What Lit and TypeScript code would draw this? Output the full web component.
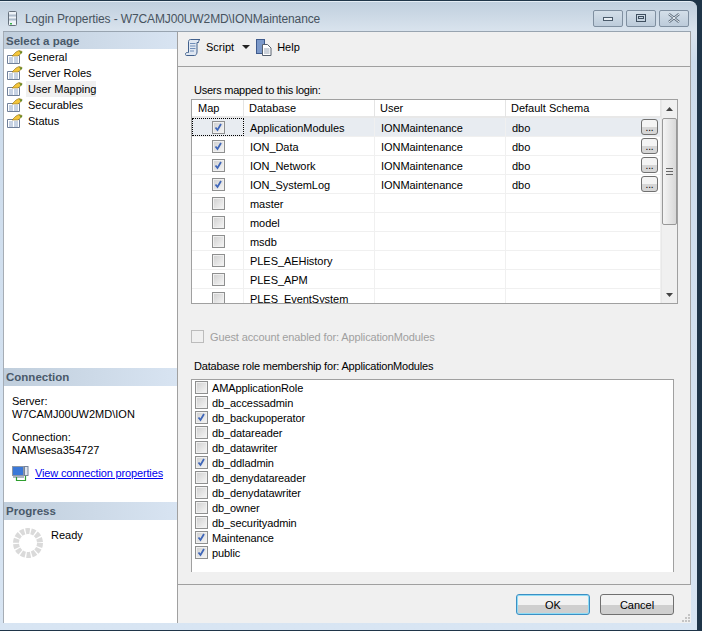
import {LitElement, css, html} from 'lit';
import {customElement} from 'lit/decorators.js';

const pages = ['General', 'Server Roles', 'User Mapping', 'Securables', 'Status'];

const users = [
  {db: 'ApplicationModules', on: true},
  {db: 'ION_Data', on: true},
  {db: 'ION_Network', on: true},
  {db: 'ION_SystemLog', on: true},
  {db: 'master', on: false},
  {db: 'model', on: false},
  {db: 'msdb', on: false},
  {db: 'PLES_AEHistory', on: false},
  {db: 'PLES_APM', on: false},
  {db: 'PLES_EventSystem', on: false},
];

const roles = [
  {name: 'AMApplicationRole', on: false},
  {name: 'db_accessadmin', on: false},
  {name: 'db_backupoperator', on: true},
  {name: 'db_datareader', on: false},
  {name: 'db_datawriter', on: false},
  {name: 'db_ddladmin', on: true},
  {name: 'db_denydatareader', on: false},
  {name: 'db_denydatawriter', on: false},
  {name: 'db_owner', on: false},
  {name: 'db_securityadmin', on: false},
  {name: 'Maintenance', on: true},
  {name: 'public', on: true},
];

const pageIcon = html`<svg class="page-icon" width="16" height="14" viewBox="0 0 16 14">
  <path d="M0.5 5.500h12v8h-12z" fill="#fff" stroke="#6f7f99"/>
  <path d="M2 8h4M7 8h4M2 10h4M7 10h4M2 12h4M7 12h4" stroke="#8fa6c8"/>
  <path d="M5 6l4-4 3-1.500 3 1-1 2-3 2.500H6z" fill="#f4c63c" stroke="#8a6a14" stroke-width=".6"/>
  <path d="M12 .8l3.500 1.200-1.500 2z" fill="#5f8a2c"/>
</svg>`;

@customElement('app-root')
export class AppRoot extends LitElement {
  static styles = css`
    :host {
      display: block;
      width: 702px;
      height: 631px;
      background: #1f3549;
      font-family: 'Liberation Sans', Arial, sans-serif;
      font-size: 11px;
      color: #000;
      overflow: hidden;
    }
    .window {
      width: 697px;
      height: 629px;
      margin-top: 1px;
      box-sizing: border-box;
      background: linear-gradient(180deg, #c0cfde 0, #dae4ee 30px, #cddcec 60px, #d8e5f3 100%);
      border-radius: 0 7px 0 0;
      padding: 0 6px 7px 3px;
      display: flex;
      flex-direction: column;
      border-top: 1px solid #e4edf5;
    }
    .titlebar {
      height: 29px;
      flex: none;
      display: flex;
      align-items: center;
      box-sizing: border-box;
      padding: 3px 0 0 5px;
      gap: 8px;
      font-size: 12px;
      color: #47535e;
      letter-spacing: -0.12px;
    }
    .title-text { flex: 1; margin-top: 2px; }
    .win-buttons { display: flex; gap: 3px; margin-right: 2px; }
    .win-btn {
      width: 30px;
      height: 17px;
      box-sizing: border-box;
      border: 1px solid #7f8fa0;
      border-radius: 2px;
      background: linear-gradient(180deg, #d4dfe9, #bccbda);
      display: flex;
      align-items: center;
      justify-content: center;
    }
    .dialog {
      flex: 1;
      min-height: 0;
      display: flex;
      background: #f0f0f0;
      border-top: 1px solid #98a4b0;
    }
    .side {
      width: 175px;
      flex: none;
      box-sizing: border-box;
      background: #fff;
      border-left: 1px solid #a6adb5;
      border-right: 1px solid #a0a0a0;
      display: flex;
      flex-direction: column;
    }
    .side-head {
      height: 18px;
      flex: none;
      display: flex;
      align-items: center;
      padding-left: 2px;
      font-weight: bold;
      font-size: 11.5px;
      color: #49596a;
      background: linear-gradient(90deg, #c0cedc, #d8e4f2);
    }
    .side-head.first { height: 17px; }
    .page-list { display: flex; flex-direction: column; height: 319px; flex: none; }
    .page-row { height: 16px; display: flex; align-items: center; padding-left: 3px; gap: 3px; }
    .page-icon { flex: none; }
    .page-name { padding: 0 2px; line-height: 16px; white-space: nowrap; }
    .page-name.active { background: #f0f0f0; width: 70px; box-sizing: border-box; }
    .conn { height: 116px; box-sizing: border-box; padding: 9px 8px 0; flex: none; line-height: 13px; }
    .conn p { margin: 0 0 10px; white-space: nowrap; }
    .conn-link { display: flex; align-items: center; gap: 6px; margin-top: -1px; white-space: nowrap; }
    .conn-link a { color: #0000ee; text-decoration: underline; letter-spacing: -0.15px; }
    .progress { display: flex; padding: 8px 0 0 9px; gap: 8px; line-height: 13px; }
    .progress span { padding-top: 1px; }
    .content { flex: 1; min-width: 0; display: flex; flex-direction: column; }
    .toolbar {
      height: 35px;
      flex: none;
      box-sizing: border-box;
      border-bottom: 1px solid #a0a0a0;
      border-right: 1px solid #a0a0a0;
      display: flex;
      align-items: center;
      padding: 0 0 4px 7px;
    }
    .tool-icon { flex: none; margin-right: 5px; }
    .arrow { width: 0; height: 0; border: 4px solid transparent; border-top-color: #222; border-bottom: 0; margin: 0 6px 0 8px; }
    .form {
      flex: 1;
      min-height: 0;
      box-sizing: border-box;
      padding: 16px 0 12px 13px;
      display: flex;
      flex-direction: column;
      border-right: 1px solid #a0a0a0;
    }
    .label { line-height: 14px; height: 14px; margin: 0 0 2px 3px; letter-spacing: -0.25px; }
    .grid {
      width: 487px;
      height: 205px;
      flex: none;
      box-sizing: border-box;
      background: #fff;
      border: 1px solid #a0a0a0;
      display: flex;
      overflow: hidden;
    }
    .table { flex: 1; min-width: 0; overflow: hidden; }
    .grid-row {
      display: grid;
      grid-template-columns: 52px 131px 131px 155px;
      height: 19px;
      box-sizing: border-box;
      border-bottom: 1px solid #f0f0f0;
      align-items: center;
    }
    .grid-row.head { height: 18px; border-bottom: 2px solid #e8e8e8; }
    .head-cell {
      border-right: 1px solid #e4e4e4;
      height: 100%;
      padding-left: 5px;
      line-height: 17px;
      box-sizing: border-box;
    }
    .head-cell.map { padding-left: 6px; }
    .grid-row.selected { background: #e8ecf1; }
    .cell {
      height: 100%;
      display: flex;
      align-items: center;
      padding: 1px 2px 0 6px;
      box-sizing: border-box;
      border-right: 1px solid #f0f0f0;
      letter-spacing: -0.05px;
    }
    .map-cell { justify-content: center; padding: 0 0 0 2px; }
    .selected .map-cell { outline: 1px dotted #000; outline-offset: -1px; }
    .more {
      margin: -1px 0 0 auto;
      width: 17px;
      height: 16px;
      box-sizing: border-box;
      border: 1px solid #707070;
      border-radius: 3px;
      background: linear-gradient(180deg, #f4f4f4 50%, #d6d6d6 50%);
      font-size: 10px;
      line-height: 15px;
      text-align: center;
    }
    .box {
      width: 13px;
      height: 13px;
      flex: none;
      box-sizing: border-box;
      border: 1px solid #8e8f8f;
      background: linear-gradient(135deg, #cfcfcf, #f6f6f6);
      box-shadow: inset 0 0 0 1px #f0f0f0;
      display: block;
    }
    .box svg { display: block; }
    .scroll {
      width: 16px;
      flex: none;
      background: #f0f0f0;
      display: flex;
      flex-direction: column;
      align-items: center;
      border-left: 1px solid #e8e8e8;
      box-sizing: border-box;
    }
    .scroll-end { width: 100%; flex: none; display: flex; align-items: center; justify-content: center; }
    .scroll-end.up { height: 18px; }
    .scroll-end.down { height: 17px; }
    .thumb {
      width: 15px;
      height: 107px;
      box-sizing: border-box;
      flex: none;
      border: 1px solid #989898;
      border-radius: 2px;
      background: linear-gradient(90deg, #f4f4f4, #d8d8d8);
      display: flex;
      align-items: center;
      justify-content: center;
    }
    .spacer { flex: 1; }
    .guest {
      display: flex;
      align-items: center;
      gap: 6px;
      color: #a0a0a0;
      margin-top: 26px;
      height: 13px;
      letter-spacing: -0.12px;
      flex: none;
    }
    .guest .box { background: #f0f0f0; border-color: #bcbcbc; box-shadow: none; }
    .role-label { margin: 16px 0 6px 3px; height: 14px; line-height: 14px; letter-spacing: -0.2px; flex: none; }
    .roles {
      width: 483px;
      flex: 1;
      min-height: 0;
      box-sizing: border-box;
      background: #fff;
      border: 1px solid #a0a0a0;
      border-bottom: none;
      padding: 0 0 0 3px;
      display: flex;
      flex-direction: column;
    }
    .role { height: 15px; display: flex; align-items: center; gap: 4px; flex: none; letter-spacing: -0.1px; }
    .footer {
      height: 39px;
      flex: none;
      box-sizing: border-box;
      border-top: 1px solid #a0a0a0;
      display: flex;
      justify-content: flex-end;
      gap: 10px;
      padding: 9px 17px 0 0;
      position: relative;
    }
    .btn {
      width: 74px;
      height: 21px;
      box-sizing: border-box;
      border: 1px solid #707070;
      border-radius: 3px;
      background: linear-gradient(180deg, #f2f2f2 50%, #cfcfcf 50%);
      display: flex;
      align-items: center;
      justify-content: center;
    }
    .btn.primary { border-color: #3c8fc4; box-shadow: inset 0 0 0 1px #8fdcf5; }
    .grip { position: absolute; right: 1px; bottom: 1px; }
  `;

  box(on: boolean) {
    return html`<span class="box">${on
      ? html`<svg width="11" height="11" viewBox="0 0 11 11"><path d="M2.500 5.500l2 2.500 3.500-6" fill="none" stroke="#3f66b8" stroke-width="1.800"/></svg>`
      : ''}</span>`;
  }

  render() {
    return html`<div class="window">
      <div class="titlebar">
        <svg width="9" height="15" viewBox="0 0 9 15">
          <rect x="0.500" y="0.500" width="8" height="14" rx="1" fill="#eef3f8" stroke="#66717d"/>
          <path d="M1 4.500h7M1 8.500h7" stroke="#aebccb" stroke-width="2"/>
          <rect x="2" y="12" width="2" height="1.500" fill="#3bb24a"/>
        </svg>
        <span class="title-text">Login Properties - W7CAMJ00UW2MD\\IONMaintenance</span>
        <div class="win-buttons">
          <span class="win-btn"><svg width="12" height="8" viewBox="0 0 12 8"><rect x="1.500" y="3.500" width="9" height="3" fill="#e8eef4" stroke="#4a5a6a"/></svg></span>
          <span class="win-btn"><svg width="12" height="10" viewBox="0 0 12 10"><rect x="1.500" y="1.500" width="9" height="7" fill="none" stroke="#3f4f5f"/><rect x="3.500" y="3.500" width="5" height="2" fill="none" stroke="#3f4f5f"/></svg></span>
          <span class="win-btn"><svg width="14" height="10" viewBox="0 0 14 10"><path d="M2 1l10 8M12 1L2 9" stroke="#5a6a7a" stroke-width="2.400"/><path d="M2 1l10 8M12 1L2 9" stroke="#eef3f8" stroke-width="1"/></svg></span>
        </div>
      </div>
      <div class="dialog">
        <div class="side">
          <div class="side-head first">Select a page</div>
          <div class="page-list">
            ${pages.map((p) => html`<div class="page-row">${pageIcon}<span class="page-name ${p === 'User Mapping' ? 'active' : ''}">${p}</span></div>`)}
          </div>
          <div class="side-head">Connection</div>
          <div class="conn">
            <p>Server:<br />W7CAMJ00UW2MD\\ION</p>
            <p>Connection:<br />NAM\\sesa354727</p>
            <div class="conn-link">
              <svg width="17" height="15" viewBox="0 0 17 15">
                <rect x="0.500" y="0.500" width="11" height="9" fill="#3a78d8" stroke="#8c97a6"/>
                <rect x="12.500" y="0.500" width="3.500" height="9" fill="#dfe6ee" stroke="#77849a"/>
                <rect x="1" y="10" width="11" height="2" fill="#a9b4c2"/>
                <path d="M4.500 11v3.500h9V10" fill="none" stroke="#2f9e2f" stroke-width="1.200"/>
              </svg>
              <a href="#">View connection properties</a>
            </div>
          </div>
          <div class="side-head">Progress</div>
          <div class="progress">
            <svg width="30" height="30" viewBox="0 0 30 30">
              <circle cx="15" cy="15" r="12" fill="none" stroke="#dadada" stroke-width="6" stroke-dasharray="4.100 1.286"/>
            </svg>
            <span>Ready</span>
          </div>
        </div>
        <div class="content">
          <div class="toolbar">
            <svg class="tool-icon" width="16" height="17" viewBox="0 0 16 17">
              <path d="M3.500 2.500c0-1 .8-2 2-2H15c-1 .6-1.500 1.500-1.500 3H12v9.500c0 1.800-1 3.500-2.500 3.500H1.500C.6 16.500 0 15.500 .5 14.500c.3-.7 1-1 2-1h1z" fill="#dfe7f2" stroke="#41608c"/>
              <path d="M5 4.500h5.500M5 7h5.500M5 9.500h5.500M5 12h4" stroke="#6f8db8"/>
            </svg>
            <span>Script</span>
            <span class="arrow"></span>
            <svg class="tool-icon" width="16" height="17" viewBox="0 0 16 17">
              <rect x="0.500" y="0.500" width="8" height="14" fill="#7c99c9" stroke="#3f5b8d"/>
              <path d="M6.500 5.500h5l3.500 3.500v7.500H6.500z" fill="#fff" stroke="#56606e"/>
              <path d="M8 10h5.500M8 12h5.500M8 14h5.500" stroke="#9aa6b6"/>
            </svg>
            <span>Help</span>
          </div>
          <div class="form">
            <div class="label">Users mapped to this login:</div>
            <div class="grid">
              <div class="table">
                <div class="grid-row head">
                  <div class="head-cell map">Map</div>
                  <div class="head-cell">Database</div>
                  <div class="head-cell">User</div>
                  <div class="head-cell">Default Schema</div>
                </div>
                ${users.map((u, i) => html`<div class="grid-row ${i === 0 ? 'selected' : ''}">
                  <div class="cell map-cell">${this.box(u.on)}</div>
                  <div class="cell">${u.db}</div>
                  <div class="cell">${u.on ? 'IONMaintenance' : ''}</div>
                  <div class="cell">${u.on ? html`dbo<span class="more">...</span>` : ''}</div>
                </div>`)}
              </div>
              <div class="scroll">
                <div class="scroll-end up"><svg width="7" height="4" viewBox="0 0 7 4"><path d="M3.500 0L7 4H0z" fill="#444"/></svg></div>
                <div class="thumb"><svg width="7" height="7" viewBox="0 0 7 7"><path d="M0 .5h7M0 3.500h7M0 6.500h7" stroke="#666"/></svg></div>
                <div class="spacer"></div>
                <div class="scroll-end down"><svg width="7" height="4" viewBox="0 0 7 4"><path d="M3.500 4L7 0H0z" fill="#444"/></svg></div>
              </div>
            </div>
            <div class="guest"><span class="box"></span>Guest account enabled for: ApplicationModules</div>
            <div class="role-label">Database role membership for: ApplicationModules</div>
            <div class="roles">
              ${roles.map((r) => html`<div class="role">${this.box(r.on)}<span>${r.name}</span></div>`)}
            </div>
          </div>
          <div class="footer">
            <div class="btn primary">OK</div>
            <div class="btn">Cancel</div>
            <svg class="grip" width="8" height="8" viewBox="0 0 8 8">
              <path d="M6 0h2v2H6zM3 3h2v2H3zM6 3h2v2H6zM0 6h2v2H0zM3 6h2v2H3zM6 6h2v2H6z" fill="#c4c4c4"/>
            </svg>
          </div>
        </div>
      </div>
    </div>`;
  }
}
